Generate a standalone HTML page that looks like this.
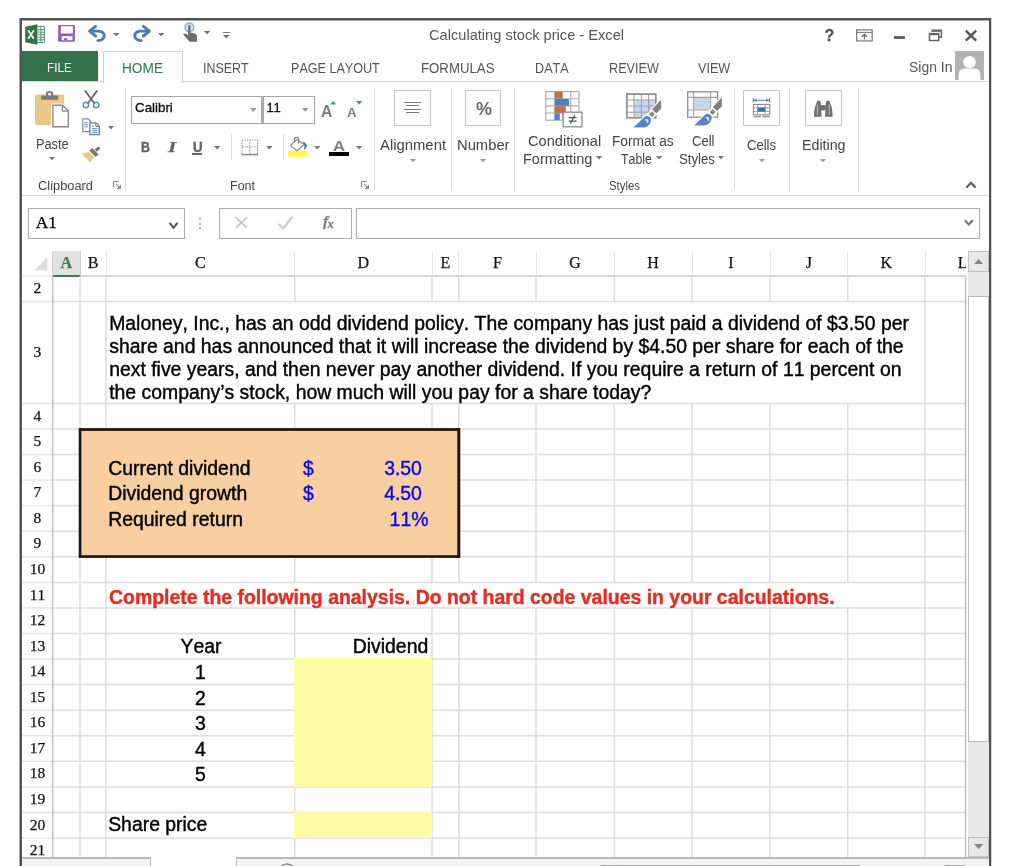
<!DOCTYPE html>
<html lang="en"><head><meta charset="utf-8"><title>Calculating stock price - Excel</title>
<style>
html,body{margin:0;padding:0;background:#fff;}
body{width:1024px;height:866px;overflow:hidden;position:relative;font-kerning:none;}
#app{position:absolute;left:0;top:0;width:1024px;height:866px;will-change:transform;}
.a{position:absolute;display:block;}
.t{position:absolute;white-space:pre;display:block;}
.s{font-family:"Liberation Sans",sans-serif;}
.r{font-family:"Liberation Serif",serif;-webkit-text-stroke:0.25px;}
.b{font-weight:bold;}
.i{font-style:italic;}
</style></head>
<body>
<div id="app">
<!-- part1 -->
<div class="a" style="left:19px;top:18px;width:973px;height:3px;background:#a7a7a7;"></div>
<div class="a" style="left:19px;top:18px;width:1px;height:848px;background:#a7a7a7;"></div>
<div class="a" style="left:991px;top:18px;width:1px;height:848px;background:#d2d2d2;"></div>
<div class="a" style="left:20px;top:20px;width:971px;height:1px;background:#a7a7a7;"></div>
<div class="a" style="left:22px;top:20px;width:967px;height:1px;background:#a7a7a7;"></div>
<div class="a" style="left:20px;top:18px;width:971px;height:2px;background:#525252;"></div>
<div class="a" style="left:20px;top:18px;width:2px;height:848px;background:#525252;"></div>
<div class="a" style="left:989px;top:18px;width:2px;height:848px;background:#525252;"></div>
<svg class="a" style="left:25px;top:24px" width="20" height="21" viewBox="0 0 20 21"><rect x="11" y="2.4" width="8.4" height="16.2" rx="0.6" fill="#fff" stroke="#3b7a52" stroke-width="0.9"/><path d="M12.5 5.5h6.6M12.5 8.1h6.6M12.5 10.7h6.6M12.5 13.3h6.6M12.5 15.9h6.6" stroke="#3b7a52" stroke-width="0.8"/><path d="M15.9 2.5v16" stroke="#3b7a52" stroke-width="0.8"/><path d="M0.2 2.7L12.4 0.2V20.8L0.2 18.3Z" fill="#34744b"/><path d="M3.2 6.4L8.8 14.8M8.8 6.4L3.2 14.8" stroke="#fff" stroke-width="1.7" fill="none"/></svg>
<svg class="a" style="left:58px;top:25px" width="17" height="17" viewBox="0 0 17 17"><rect x="0.2" y="0.1" width="16.7" height="16.7" rx="0.8" fill="#8c5fb2"/><rect x="2.8" y="1.2" width="12.1" height="7.3" fill="#fff"/><rect x="3.7" y="11.2" width="10.8" height="4" fill="#fff"/><rect x="6" y="13.2" width="3.3" height="2.2" fill="#8c5fb2"/></svg>
<svg class="a" style="left:87px;top:24px" width="20" height="18" viewBox="0 0 20 18"><path d="M95.6 26.4L89.6 31.2L95.6 36" fill="none" stroke="#4b7ab5" stroke-width="2.9" stroke-linecap="round" stroke-linejoin="round" transform="translate(-87,-24)"/><path d="M90.5 31.2H98.6C103.4 31.2 105.6 35.2 103.4 38.2C102 40 100 40.6 97.8 40.6" fill="none" stroke="#4b7ab5" stroke-width="2.8" stroke-linecap="round" transform="translate(-87,-24)"/></svg>
<svg class="a" style="left:112.8px;top:33px" width="6.4" height="3.4" viewBox="0 0 6.4 3.4"><path d="M0 0H6.4L3.2 3.4Z" fill="#777"/></svg>
<svg class="a" style="left:131.6px;top:24px" width="20" height="18" viewBox="0 0 20 18"><g transform="translate(20,0) scale(-1,1)"><path d="M95.6 26.4L89.6 31.2L95.6 36" fill="none" stroke="#4b7ab5" stroke-width="2.9" stroke-linecap="round" stroke-linejoin="round" transform="translate(-87,-24)"/><path d="M90.5 31.2H98.6C103.4 31.2 105.6 35.2 103.4 38.2C102 40 100 40.6 97.8 40.6" fill="none" stroke="#4b7ab5" stroke-width="2.8" stroke-linecap="round" transform="translate(-87,-24)"/></g></svg>
<svg class="a" style="left:157.9px;top:33px" width="6.2" height="3.4" viewBox="0 0 6.2 3.4"><path d="M0 0H6.2L3.1 3.4Z" fill="#777"/></svg>
<svg class="a" style="left:182px;top:21px" width="17" height="22" viewBox="0 0 17 22"><circle cx="7.4" cy="6.4" r="4.3" fill="#dbe6f3" stroke="#8fb0d8" stroke-width="1.6"/><path d="M6.1 4.5Q7.3 3.6 8.5 4.5V11.5L12.8 12.6Q15 13.3 15 15.5V20.8H7.6L1.2 13.6Q2.3 11.9 4.2 13L6.1 14.6Z" fill="#6d6d6d"/></svg>
<svg class="a" style="left:203.9px;top:31px" width="6.2" height="3.6" viewBox="0 0 6.2 3.6"><path d="M0 0H6.2L3.1 3.6Z" fill="#777"/></svg>
<div class="a" style="left:223px;top:31.5px;width:6.800000000000011px;height:1.2999999999999972px;background:#777;"></div>
<svg class="a" style="left:223.0px;top:35px" width="6.8" height="3.6" viewBox="0 0 6.8 3.6"><path d="M0 0H6.8L3.4 3.6Z" fill="#777"/></svg>
<span class="t s" style="left:428.60px;top:27.00px;font-size:14.5px;line-height:16px;color:#555;transform:scaleX(1.0083);transform-origin:0 50%;">Calculating stock price - Excel</span>
<span class="t s b" style="left:824.60px;top:27.00px;font-size:16px;line-height:17px;color:#555;-webkit-text-stroke:0.3px;">?</span>
<svg class="a" style="left:856px;top:29px" width="17" height="13" viewBox="0 0 17 13"><rect x="0.6" y="0.9" width="15.6" height="11" fill="#fff" stroke="#777" stroke-width="1.2"/><path d="M0.6 3.4H16.2" stroke="#777" stroke-width="1"/><path d="M8.4 10.4V5.6M5.8 7.8L8.4 5.3L11 7.8" stroke="#666" stroke-width="1.2" fill="none"/></svg>
<div class="a" style="left:894px;top:36.2px;width:11.200000000000045px;height:2.5999999999999943px;background:#666;"></div>
<svg class="a" style="left:928px;top:29px" width="15" height="13" viewBox="0 0 15 13"><path d="M4.2 3V1.2H13.4V8.2H11" fill="none" stroke="#666" stroke-width="1.5"/><path d="M4.2 2.2H13.4" stroke="#666" stroke-width="1.2"/><rect x="1.5" y="4.6" width="9.3" height="6.9" fill="#fff" stroke="#666" stroke-width="1.5"/><path d="M1.5 5.6H10.8" stroke="#666" stroke-width="1.3"/></svg>
<svg class="a" style="left:964px;top:29px" width="14" height="13" viewBox="0 0 14 13"><path d="M1.8 1.6L12.2 11.6M12.2 1.6L1.8 11.6" stroke="#555" stroke-width="2.3" fill="none"/></svg>
<div class="a" style="left:22px;top:81px;width:967px;height:1px;background:#d6d6d6;"></div>
<div class="a" style="left:22px;top:51px;width:76px;height:30px;background:#35714a;"></div>
<div class="a" style="left:103px;top:51px;width:79.5px;height:31.5px;background:#fff;border:1px solid #d0d0d0;border-bottom:none;box-sizing:border-box;"></div>
<span class="t s" style="left:46.60px;top:60.00px;font-size:13.2px;line-height:15px;color:#fff;transform:scaleX(0.8860);transform-origin:0 50%;">FILE</span>
<span class="t s" style="left:122.00px;top:61.00px;font-size:13.8px;line-height:15px;color:#2f7a4d;transform:scaleX(0.9903);transform-origin:0 50%;">HOME</span>
<span class="t s" style="left:202.50px;top:61.00px;font-size:13.8px;line-height:15px;color:#555;transform:scaleX(0.8992);transform-origin:0 50%;">INSERT</span>
<span class="t s" style="left:290.50px;top:61.00px;font-size:13.8px;line-height:15px;color:#555;transform:scaleX(0.9120);transform-origin:0 50%;">PAGE LAYOUT</span>
<span class="t s" style="left:420.80px;top:61.00px;font-size:13.8px;line-height:15px;color:#555;transform:scaleX(0.9586);transform-origin:0 50%;">FORMULAS</span>
<span class="t s" style="left:535.30px;top:61.00px;font-size:13.8px;line-height:15px;color:#555;transform:scaleX(0.9164);transform-origin:0 50%;">DATA</span>
<span class="t s" style="left:609.40px;top:61.00px;font-size:13.8px;line-height:15px;color:#555;transform:scaleX(0.9166);transform-origin:0 50%;">REVIEW</span>
<span class="t s" style="left:697.50px;top:61.00px;font-size:13.8px;line-height:15px;color:#555;transform:scaleX(0.9157);transform-origin:0 50%;">VIEW</span>
<span class="t s" style="left:908.50px;top:59.00px;font-size:14.4px;line-height:16px;color:#555;transform:scaleX(0.9704);transform-origin:0 50%;">Sign In</span>
<svg class="a" style="left:955px;top:51px" width="29" height="29" viewBox="0 0 29 29"><rect width="29" height="29" fill="#b3b3b3"/><circle cx="14.5" cy="11.2" r="6.2" fill="#fff"/><path d="M3.6 29V24.5Q3.6 17.6 9.4 17.6H19.6Q25.4 17.6 25.4 24.5V29Z" fill="#fff"/></svg>
<!-- part2 -->
<div class="a" style="left:22px;top:195px;width:967px;height:1px;background:#d6d6d6;"></div>
<div class="a" style="left:125px;top:87.5px;width:1px;height:102.0px;background:#dadada;"></div>
<div class="a" style="left:373.5px;top:87.5px;width:1.0px;height:102.0px;background:#dadada;"></div>
<div class="a" style="left:450.5px;top:87.5px;width:1.0px;height:103.5px;background:#dadada;"></div>
<div class="a" style="left:514px;top:87.5px;width:1px;height:103.5px;background:#dadada;"></div>
<div class="a" style="left:734px;top:87.5px;width:1px;height:102.0px;background:#dadada;"></div>
<div class="a" style="left:788.5px;top:87.5px;width:1.0px;height:103.5px;background:#dadada;"></div>
<div class="a" style="left:857.5px;top:87.5px;width:1.0px;height:103.5px;background:#dadada;"></div>
<svg class="a" style="left:34px;top:90px" width="37" height="39" viewBox="0 0 37 39"><rect x="1" y="4.6" width="29.2" height="30.4" rx="1.8" fill="#e9c785"/><path d="M7 5.4H12V3.2Q12 1 15.6 1Q19.2 1 19.2 3.2V5.4H24.2V9.8H7Z" fill="#7a7a7a"/><circle cx="15.6" cy="4.2" r="1.4" fill="#fff"/><path d="M17 13.4H29.2L36 20.2V38.4H17Z" fill="#fff"/><path d="M18.9 15.2H28.6L34.3 20.9V36.7H18.9Z" fill="#fff" stroke="#8a8a8a" stroke-width="1.4"/><path d="M28.4 15.4V21.2H34.2" fill="none" stroke="#8a8a8a" stroke-width="1.2"/></svg>
<span class="t s" style="left:36.30px;top:136.00px;font-size:14.0px;line-height:16px;color:#444;transform:scaleX(0.9079);transform-origin:0 50%;">Paste</span>
<svg class="a" style="left:49.0px;top:156.8px" width="6" height="3.4" viewBox="0 0 6 3.4"><path d="M0 0H6L3.0 3.4Z" fill="#777"/></svg>
<svg class="a" style="left:81px;top:90px" width="20" height="20" viewBox="0 0 20 20"><path d="M4.4 1L13.2 13.2M15.8 1L7 13.2" stroke="#6a6a6a" stroke-width="1.9" fill="none" stroke-linecap="round"/><circle cx="4.9" cy="15" r="2.7" fill="none" stroke="#5b8bc9" stroke-width="1.5"/><circle cx="15.2" cy="15" r="2.7" fill="none" stroke="#5b8bc9" stroke-width="1.5"/></svg>
<svg class="a" style="left:81px;top:117px" width="20" height="19" viewBox="0 0 20 19"><path d="M1.8 1.9H7.2L9.8 4.5V14.6H1.8Z" fill="#fff" stroke="#8a8a8a" stroke-width="1.2"/><path d="M3.4 5.4H6.4M3.4 7.6H6.8M3.4 9.8H6.8" stroke="#5b8bc9" stroke-width="1"/><path d="M8.9 5.9H15L18.3 9.2V17.6H8.9Z" fill="#fff" stroke="#7a7a7a" stroke-width="1.3"/><path d="M14.8 6V9.4H18.2" fill="none" stroke="#7a7a7a" stroke-width="1"/><path d="M10.8 9.4H13M10.8 11.6H16.4M10.8 13.6H16.4M10.8 15.6H16.4" stroke="#5b8bc9" stroke-width="1"/></svg>
<svg class="a" style="left:108.0px;top:126px" width="6" height="3.6" viewBox="0 0 6 3.6"><path d="M0 0H6L3.0 3.6Z" fill="#777"/></svg>
<svg class="a" style="left:80px;top:144px" width="23" height="20" viewBox="0 0 23 20"><path d="M1.6 9.6L9 8L14.4 13.2L10.2 18.6Z" fill="#e9c785"/><path d="M9.2 6.4L12.2 3.9L18.6 10.4L15.6 13Z" fill="#777"/><path d="M14.6 5.4L18.4 2.2L20.6 4.4L17 7.8Z" fill="#777"/></svg>
<span class="t s" style="left:37.50px;top:178.00px;font-size:13.1px;line-height:15px;color:#444;transform:scaleX(0.9812);transform-origin:0 50%;">Clipboard</span>
<svg class="a" style="left:113px;top:180.5px" width="9" height="9" viewBox="0 0 9 9"><path d="M0.5 6V0.5H6" fill="none" stroke="#888" stroke-width="1"/><path d="M3.2 3.2L7.2 7.2" stroke="#888" stroke-width="1.1"/><path d="M8 3.6V8H3.6Z" fill="#888"/></svg>
<div class="a" style="left:130.5px;top:95.8px;width:131.5px;height:28.400000000000006px;background:#fff;border:1px solid #a6a6a6;box-sizing:border-box;"></div>
<div class="a" style="left:262.6px;top:95.8px;width:52.39999999999998px;height:28.400000000000006px;background:#fff;border:1px solid #a6a6a6;box-sizing:border-box;"></div>
<div class="a" style="left:261.6px;top:95.8px;width:1.599999999999966px;height:28.400000000000006px;background:#b5b5b5;"></div>
<span class="t s" style="left:134.90px;top:100.00px;font-size:13px;line-height:15px;color:#111;transform:scaleX(1.0264);transform-origin:0 50%;-webkit-text-stroke:0.3px;">Calibri</span>
<svg class="a" style="left:249.8px;top:108px" width="6.4" height="4" viewBox="0 0 6.4 4"><path d="M0 0H6.4L3.2 4Z" fill="#999"/></svg>
<span class="t s" style="left:266.40px;top:100.00px;font-size:13px;line-height:15px;color:#111;-webkit-text-stroke:0.3px;">11</span>
<svg class="a" style="left:301.8px;top:108px" width="6.4" height="4" viewBox="0 0 6.4 4"><path d="M0 0H6.4L3.2 4Z" fill="#999"/></svg>
<span class="t s b" style="left:321.00px;top:102.00px;font-size:16.8px;line-height:19px;color:#7d7d7d;transform:scaleX(0.9398);transform-origin:0 50%;">A</span>
<svg class="a" style="left:330.2px;top:101.4px" width="6.4" height="3.6" viewBox="0 0 6.4 3.6"><path d="M0 3.6H6.4L3.2 0Z" fill="#4f81c4"/></svg>
<span class="t s b" style="left:347.40px;top:105.00px;font-size:12.8px;line-height:15px;color:#7d7d7d;transform:scaleX(1.0388);transform-origin:0 50%;">A</span>
<svg class="a" style="left:355.6px;top:101.4px" width="6.4" height="3.6" viewBox="0 0 6.4 3.6"><path d="M0 0H6.4L3.2 3.6Z" fill="#4f81c4"/></svg>
<span class="t s b" style="left:140.60px;top:139.00px;font-size:14px;line-height:16px;color:#666;transform:scaleX(0.8805);transform-origin:0 50%;-webkit-text-stroke:0.5px;">B</span>
<span class="t r b i" style="left:168.00px;top:138.00px;font-size:15.5px;line-height:17px;color:#666;transform:scaleX(1.3600);transform-origin:0 50%;">I</span>
<span class="t s b" style="left:192.60px;top:139.00px;font-size:14px;line-height:16px;color:#666;transform:scaleX(0.9497);transform-origin:0 50%;-webkit-text-stroke:0.4px;">U</span>
<div class="a" style="left:192.4px;top:153.3px;width:10.0px;height:1.5px;background:#666;"></div>
<svg class="a" style="left:213.9px;top:146px" width="6.2" height="3.5" viewBox="0 0 6.2 3.5"><path d="M0 0H6.2L3.1 3.5Z" fill="#777"/></svg>
<div class="a" style="left:231.2px;top:134px;width:1.0px;height:25.80000000000001px;background:#dadada;"></div>
<svg class="a" style="left:241px;top:138.5px" width="18" height="17" viewBox="0 0 18 17"><path d="M1 1H16.6M1 8H16.6M1 1V15M8.8 1V15M16.6 1V15" stroke="#8a8a8a" stroke-width="1.1" stroke-dasharray="1.2 1.3" fill="none"/><path d="M0.4 15.6H17.2" stroke="#8a8a8a" stroke-width="1.5"/></svg>
<svg class="a" style="left:265.8px;top:146px" width="6.4" height="3.5" viewBox="0 0 6.4 3.5"><path d="M0 0H6.4L3.2 3.5Z" fill="#777"/></svg>
<div class="a" style="left:283px;top:134px;width:1px;height:25.599999999999994px;background:#dadada;"></div>
<svg class="a" style="left:284px;top:132px" width="28" height="28" viewBox="284 132 28 28"><rect x="288.1" y="150.9" width="19" height="5.9" fill="#fdfb48"/><path d="M296.6 139.6L304.2 144.6L297 150.8L290.4 145.4Z" fill="#fff" stroke="#8a8a8a" stroke-width="1.2" stroke-linejoin="round"/><path d="M294.5 141.8V138.4Q294.5 137.3 295.6 137.3H297.5Q298.6 137.3 298.6 138.4V143.4" fill="none" stroke="#7c7c7c" stroke-width="1.2"/><path d="M302.6 141.4Q306.6 142.6 307 145.6Q307 148.4 304 149.9Q305 146.6 303.9 144.4Z" fill="#4a7ab8"/></svg>
<svg class="a" style="left:314.3px;top:146px" width="6.4" height="3.5" viewBox="0 0 6.4 3.5"><path d="M0 0H6.4L3.2 3.5Z" fill="#777"/></svg>
<span class="t s b" style="left:333.30px;top:137.00px;font-size:15.4px;line-height:17px;color:#7d7d7d;transform:scaleX(1.0882);transform-origin:0 50%;">A</span>
<div class="a" style="left:329px;top:152.2px;width:19.80000000000001px;height:4.300000000000011px;background:#000;"></div>
<svg class="a" style="left:355.9px;top:146px" width="6.2" height="3.5" viewBox="0 0 6.2 3.5"><path d="M0 0H6.2L3.1 3.5Z" fill="#777"/></svg>
<span class="t s" style="left:229.50px;top:178.00px;font-size:13.1px;line-height:15px;color:#444;transform:scaleX(0.9537);transform-origin:0 50%;">Font</span>
<svg class="a" style="left:361px;top:180.5px" width="9" height="9" viewBox="0 0 9 9"><path d="M0.5 6V0.5H6" fill="none" stroke="#888" stroke-width="1"/><path d="M3.2 3.2L7.2 7.2" stroke="#888" stroke-width="1.1"/><path d="M8 3.6V8H3.6Z" fill="#888"/></svg>
<div class="a" style="left:394px;top:90px;width:37px;height:36px;background:#fff;border:1px solid #c8c8c8;box-sizing:border-box;"></div>
<div class="a" style="left:404px;top:101.6px;width:17px;height:1.1000000000000085px;background:#777;"></div>
<div class="a" style="left:406.4px;top:105.05px;width:12.200000000000045px;height:1.1000000000000085px;background:#777;"></div>
<div class="a" style="left:404px;top:108.5px;width:17px;height:1.0999999999999943px;background:#777;"></div>
<div class="a" style="left:406.4px;top:111.95px;width:12.200000000000045px;height:1.0999999999999943px;background:#777;"></div>
<span class="t s" style="left:379.50px;top:137.00px;font-size:14.0px;line-height:16px;color:#444;transform:scaleX(1.0603);transform-origin:0 50%;">Alignment</span>
<svg class="a" style="left:409.5px;top:159px" width="6" height="3.4" viewBox="0 0 6 3.4"><path d="M0 0H6L3.0 3.4Z" fill="#999"/></svg>
<div class="a" style="left:465px;top:90px;width:36px;height:36px;background:#fff;border:1px solid #c8c8c8;box-sizing:border-box;"></div>
<span class="t s b" style="left:475.90px;top:99.00px;font-size:18px;line-height:20px;color:#6a6a6a;transform:scaleX(0.9999);transform-origin:0 50%;">%</span>
<span class="t s" style="left:457.00px;top:137.00px;font-size:14.0px;line-height:16px;color:#444;transform:scaleX(1.0546);transform-origin:0 50%;">Number</span>
<svg class="a" style="left:480.0px;top:159px" width="6" height="3.4" viewBox="0 0 6 3.4"><path d="M0 0H6L3.0 3.4Z" fill="#999"/></svg>
<svg class="a" style="left:545px;top:91px" width="38" height="37" viewBox="0 0 38 37"><rect x="0.8" y="0.6" width="33.2" height="28.6" fill="#fff" stroke="#ababab" stroke-width="1.2"/><path d="M9.4 0.6V29.2M17.6 0.6V29.2M25.8 0.6V29.2M0.8 7.7H34M0.8 14.9H34M0.8 22H34" stroke="#ababab" stroke-width="1.1"/><rect x="10" y="0.8" width="7" height="6.8" fill="#d06a48"/><rect x="10" y="8" width="14" height="6.8" fill="#4f81bd"/><rect x="10" y="15.2" width="10.8" height="6.8" fill="#d06a48"/><rect x="10" y="22.4" width="4.8" height="6.6" fill="#4f81bd"/><rect x="18.2" y="21.2" width="18.8" height="14.6" fill="#fff" stroke="#8c8c8c" stroke-width="1.3"/><path d="M23.6 26.6H31.6M23.6 30.2H31.6M29.8 24.2L25.4 32.6" stroke="#555" stroke-width="1.2" fill="none"/></svg>
<span class="t s" style="left:527.50px;top:133.00px;font-size:14.0px;line-height:16px;color:#444;transform:scaleX(1.0439);transform-origin:0 50%;">Conditional</span>
<span class="t s" style="left:522.60px;top:151.00px;font-size:14.0px;line-height:16px;color:#444;transform:scaleX(1.0373);transform-origin:0 50%;">Formatting</span>
<svg class="a" style="left:596.4px;top:156.2px" width="6.2" height="3.4" viewBox="0 0 6.2 3.4"><path d="M0 0H6.2L3.1 3.4Z" fill="#777"/></svg>
<svg class="a" style="left:620px;top:86px" width="110" height="46" viewBox="620 86 110 46"><rect x="626.8" y="94.1" width="29" height="23.6" fill="#fff" stroke="#8e8e8e" stroke-width="1.3"/><rect x="634" y="100" width="21.6" height="17.6" fill="#c5d5ea"/><path d="M634 94V118M641.4 94V118M648.7 94V118M626.8 100H656M626.8 106H656M626.8 112.2H656" stroke="#a2a2a2" stroke-width="1.1"/><rect x="626.8" y="94.1" width="29" height="23.6" fill="none" stroke="#8e8e8e" stroke-width="1.3"/><g transform="translate(0,0)"><path d="M661.2 99.4V108.4L656.2 113.4L651.8 109.8Z" fill="#fff" stroke="#fff" stroke-width="2.4"/><path d="M661.2 99.4V108.4L656.2 113.4L651.8 109.8Z" fill="#808080"/><path d="M651.8 110.9L655.3 114.2L652 117.7L648.5 114.4Z" fill="#fff" stroke="#fff" stroke-width="2.6"/><path d="M651.8 111.3L654.9 114.3L652 117.3L648.9 114.4Z" fill="#858585"/><path d="M645.2 116.2C649.4 115.2 652.2 118.6 650.6 122.2C649.4 125.2 647 127.6 642.6 127.6H633.4Z" fill="#fff" stroke="#fff" stroke-width="2"/><path d="M645.2 116.2C649.4 115.2 652.2 118.6 650.6 122.2C649.4 125.2 647 127.6 642.6 127.6H633.4Z" fill="#5785c5"/><path d="M644.6 119.4Q647.6 118 648.6 120.8Q648.8 122.6 647.4 123.4Q646.8 121 644.6 119.4Z" fill="#e4edf8"/></g><rect x="687.7" y="91.8" width="30" height="25.4" fill="#fff" stroke="#8e8e8e" stroke-width="1.3"/><rect x="694.2" y="98" width="16" height="11.6" fill="#c5d5ea"/><path d="M693.7 91.8V117.2M710.6 91.8V117.2M687.7 97.4H717.7M687.7 110H717.7" stroke="#a2a2a2" stroke-width="1.1"/><g transform="translate(60.7,-2.2)"><path d="M661.2 99.4V108.4L656.2 113.4L651.8 109.8Z" fill="#fff" stroke="#fff" stroke-width="2.4"/><path d="M661.2 99.4V108.4L656.2 113.4L651.8 109.8Z" fill="#808080"/><path d="M651.8 110.9L655.3 114.2L652 117.7L648.5 114.4Z" fill="#fff" stroke="#fff" stroke-width="2.6"/><path d="M651.8 111.3L654.9 114.3L652 117.3L648.9 114.4Z" fill="#858585"/><path d="M645.2 116.2C649.4 115.2 652.2 118.6 650.6 122.2C649.4 125.2 647 127.6 642.6 127.6H633.4Z" fill="#fff" stroke="#fff" stroke-width="2"/><path d="M645.2 116.2C649.4 115.2 652.2 118.6 650.6 122.2C649.4 125.2 647 127.6 642.6 127.6H633.4Z" fill="#5785c5"/><path d="M644.6 119.4Q647.6 118 648.6 120.8Q648.8 122.6 647.4 123.4Q646.8 121 644.6 119.4Z" fill="#e4edf8"/></g></svg>
<span class="t s" style="left:612.00px;top:133.00px;font-size:14.0px;line-height:16px;color:#444;transform:scaleX(0.9791);transform-origin:0 50%;">Format as</span>
<span class="t s" style="left:620.60px;top:151.00px;font-size:14.0px;line-height:16px;color:#444;transform:scaleX(0.8831);transform-origin:0 50%;">Table</span>
<svg class="a" style="left:655.9px;top:156.2px" width="6.2" height="3.4" viewBox="0 0 6.2 3.4"><path d="M0 0H6.2L3.1 3.4Z" fill="#777"/></svg>
<span class="t s" style="left:692.00px;top:133.00px;font-size:14.0px;line-height:16px;color:#444;transform:scaleX(0.9333);transform-origin:0 50%;">Cell</span>
<span class="t s" style="left:678.60px;top:151.00px;font-size:14.0px;line-height:16px;color:#444;transform:scaleX(0.9417);transform-origin:0 50%;">Styles</span>
<svg class="a" style="left:718.2px;top:156.2px" width="6" height="3.4" viewBox="0 0 6 3.4"><path d="M0 0H6L3.0 3.4Z" fill="#777"/></svg>
<span class="t s" style="left:609.00px;top:178.00px;font-size:13.1px;line-height:15px;color:#444;transform:scaleX(0.8690);transform-origin:0 50%;">Styles</span>
<div class="a" style="left:743px;top:90px;width:37px;height:36px;background:#fff;border:1px solid #c8c8c8;box-sizing:border-box;"></div>
<svg class="a" style="left:752px;top:97px" width="20" height="21" viewBox="0 0 20 21"><path d="M1.2 1V5.4M17.6 1V5.4M1.2 3.2H17.6" stroke="#4f81c4" stroke-width="1.1" fill="none"/><path d="M4.6 1.2L2 3.2L4.6 5.2ZM14.2 1.2L16.8 3.2L14.2 5.2Z" fill="#4f81c4"/><rect x="1.4" y="7.4" width="16.4" height="10.4" fill="#fff" stroke="#8a8a8a" stroke-width="1.1"/><path d="M5.6 7.4V17.8M13.2 7.4V17.8M1.4 10.8H17.8M1.4 14.4H17.8" stroke="#9a9a9a" stroke-width="1"/><rect x="5.8" y="10.6" width="7.4" height="4" fill="#3f6fb3"/><path d="M1.6 19.6H9M10.4 19.6H17.8" stroke="#8a8a8a" stroke-width="1.4"/></svg>
<span class="t s" style="left:747.00px;top:137.00px;font-size:14.0px;line-height:16px;color:#444;transform:scaleX(0.9322);transform-origin:0 50%;">Cells</span>
<svg class="a" style="left:759.0px;top:159px" width="6" height="3.4" viewBox="0 0 6 3.4"><path d="M0 0H6L3.0 3.4Z" fill="#999"/></svg>
<div class="a" style="left:805px;top:90px;width:37px;height:36px;background:#fff;border:1px solid #c8c8c8;box-sizing:border-box;"></div>
<svg class="a" style="left:813px;top:99px" width="21" height="19" viewBox="0 0 21 19"><path d="M3.4 4.6Q3.4 1.6 5.6 1.6Q7.8 1.6 7.8 4.6L8.6 17.8H1Q1 9 3.4 4.6Z" fill="#6f6f6f"/><path d="M17.2 4.6Q17.2 1.6 15 1.6Q12.8 1.6 12.8 4.6L12 17.8H19.6Q19.6 9 17.2 4.6Z" fill="#6f6f6f"/><rect x="8" y="6" width="4.6" height="5.4" fill="#6f6f6f"/><path d="M4.4 5.6V15.8" stroke="#bdbdbd" stroke-width="1"/><path d="M16.2 5.6V15.8" stroke="#bdbdbd" stroke-width="1"/></svg>
<span class="t s" style="left:802.00px;top:137.00px;font-size:14.0px;line-height:16px;color:#444;transform:scaleX(1.0164);transform-origin:0 50%;">Editing</span>
<svg class="a" style="left:820.0px;top:159px" width="6" height="3.4" viewBox="0 0 6 3.4"><path d="M0 0H6L3.0 3.4Z" fill="#999"/></svg>
<svg class="a" style="left:965px;top:180px" width="12" height="9" viewBox="0 0 12 9"><path d="M1.4 7.6L6 2.8L10.6 7.6" fill="none" stroke="#5a5a5a" stroke-width="2.2"/></svg>
<!-- part3 -->
<div class="a" style="left:28px;top:208px;width:157.3px;height:30.80000000000001px;background:#fff;border:1px solid #ababab;box-sizing:border-box;"></div>
<span class="t r" style="left:35.80px;top:213.00px;font-size:17.2px;line-height:19px;color:#000;">A1</span>
<svg class="a" style="left:168px;top:221px" width="11" height="10" viewBox="0 0 11 10"><path d="M1.6 1.8L5.5 6.8L9.4 1.8" fill="none" stroke="#555" stroke-width="2.1"/></svg>
<div class="a" style="left:199px;top:218.4px;width:2px;height:2.0px;background:#b4b4b4;"></div>
<div class="a" style="left:199px;top:222.9px;width:2px;height:2.0px;background:#b4b4b4;"></div>
<div class="a" style="left:199px;top:227.4px;width:2px;height:2.0px;background:#b4b4b4;"></div>
<div class="a" style="left:219px;top:208px;width:133px;height:30.80000000000001px;background:#fff;border:1px solid #ababab;box-sizing:border-box;"></div>
<svg class="a" style="left:234px;top:216px" width="15" height="13" viewBox="0 0 15 13"><path d="M1.6 1.4L13 11.8M13 1.4L1.6 11.8" stroke="#c4c4c4" stroke-width="1.7" fill="none"/></svg>
<svg class="a" style="left:277px;top:215px" width="17" height="15" viewBox="0 0 17 15"><path d="M1.6 9L6.2 13.4L15.4 1.8" stroke="#cacaca" stroke-width="2.2" fill="none"/></svg>
<span class="t r b i" style="left:323.00px;top:212.00px;font-size:15.5px;line-height:17px;color:#808080;-webkit-text-stroke:0.3px;">f</span>
<span class="t r b i" style="left:327.60px;top:217.00px;font-size:12.5px;line-height:14px;color:#808080;-webkit-text-stroke:0.3px;">x</span>
<div class="a" style="left:356px;top:208px;width:624.3px;height:30.80000000000001px;background:#fff;border:1px solid #ababab;box-sizing:border-box;"></div>
<svg class="a" style="left:963px;top:218px" width="12" height="9" viewBox="0 0 12 9"><path d="M1.8 2.2L5.8 6.4L9.8 2.2" fill="none" stroke="#777" stroke-width="2.2"/></svg>
<div class="a" style="left:52.5px;top:251px;width:27.5px;height:24px;background:#e1e1e1;"></div>
<div class="a" style="left:52.5px;top:274.5px;width:27.5px;height:2.3000000000000114px;background:#3d7a52;"></div>
<svg class="a" style="left:33px;top:256px" width="16" height="16" viewBox="0 0 16 16"><path d="M1.2 14.4H14.4V1.2Z" fill="#dcdcdc"/></svg>
<div class="a" style="left:79.5px;top:251px;width:1.0px;height:25px;background:#e6e6e6;"></div>
<div class="a" style="left:105.5px;top:251px;width:1.0px;height:25px;background:#e6e6e6;"></div>
<div class="a" style="left:294.2px;top:251px;width:1.0px;height:25px;background:#e6e6e6;"></div>
<div class="a" style="left:431.5px;top:251px;width:1.0px;height:25px;background:#e6e6e6;"></div>
<div class="a" style="left:458.3px;top:251px;width:1.0px;height:25px;background:#e6e6e6;"></div>
<div class="a" style="left:535.5px;top:251px;width:1.0px;height:25px;background:#e6e6e6;"></div>
<div class="a" style="left:613.8px;top:251px;width:1.0px;height:25px;background:#e6e6e6;"></div>
<div class="a" style="left:691.5px;top:251px;width:1.0px;height:25px;background:#e6e6e6;"></div>
<div class="a" style="left:769.5px;top:251px;width:1.0px;height:25px;background:#e6e6e6;"></div>
<div class="a" style="left:847.2px;top:251px;width:1.0px;height:25px;background:#e6e6e6;"></div>
<div class="a" style="left:924.5px;top:251px;width:1.0px;height:25px;background:#e6e6e6;"></div>
<div class="a" style="left:52px;top:251px;width:1px;height:25px;background:#cfcfcf;"></div>
<div class="a" style="left:79.5px;top:251px;width:1.0px;height:25px;background:#cfcfcf;"></div>
<span class="t r b" style="left:-133.75px;width:400px;text-align:center;top:254.00px;font-size:16px;line-height:17px;color:#3d7a52;">A</span>
<span class="t r" style="left:-107.00px;width:400px;text-align:center;top:254.00px;font-size:16px;line-height:17px;color:#111;">B</span>
<span class="t r" style="left:0.35px;width:400px;text-align:center;top:254.00px;font-size:16px;line-height:17px;color:#111;">C</span>
<span class="t r" style="left:163.35px;width:400px;text-align:center;top:254.00px;font-size:16px;line-height:17px;color:#111;">D</span>
<span class="t r" style="left:245.40px;width:400px;text-align:center;top:254.00px;font-size:16px;line-height:17px;color:#111;">E</span>
<span class="t r" style="left:297.40px;width:400px;text-align:center;top:254.00px;font-size:16px;line-height:17px;color:#111;">F</span>
<span class="t r" style="left:375.15px;width:400px;text-align:center;top:254.00px;font-size:16px;line-height:17px;color:#111;">G</span>
<span class="t r" style="left:453.15px;width:400px;text-align:center;top:254.00px;font-size:16px;line-height:17px;color:#111;">H</span>
<span class="t r" style="left:531.00px;width:400px;text-align:center;top:254.00px;font-size:16px;line-height:17px;color:#111;">I</span>
<span class="t r" style="left:608.85px;width:400px;text-align:center;top:254.00px;font-size:16px;line-height:17px;color:#111;">J</span>
<span class="t r" style="left:686.35px;width:400px;text-align:center;top:254.00px;font-size:16px;line-height:17px;color:#111;">K</span>
<span class="t r" style="left:762.60px;width:400px;text-align:center;top:254.00px;font-size:16px;line-height:17px;color:#111;">L</span>
<svg class="a" style="left:0;top:0" width="1024" height="866" viewBox="0 0 1024 866" fill="none"><path d="M22.00 276.00L52.50 276.00" stroke="#e6e6e6" stroke-width="1.5"/><path d="M80.00 276.00L965.50 276.00" stroke="#c9c9c9" stroke-width="1.5"/><path d="M22.00 301.60L52.50 301.60" stroke="#e6e6e6" stroke-width="1.5"/><path d="M52.50 301.60L965.50 301.60" stroke="#dcdcdc" stroke-width="1.5"/><path d="M22.00 403.50L52.50 403.50" stroke="#e6e6e6" stroke-width="1.5"/><path d="M52.50 403.50L965.50 403.50" stroke="#dcdcdc" stroke-width="1.5"/><path d="M22.00 429.00L52.50 429.00" stroke="#e6e6e6" stroke-width="1.5"/><path d="M52.50 429.00L965.50 429.00" stroke="#dcdcdc" stroke-width="1.5"/><path d="M22.00 454.56L52.50 454.56" stroke="#e6e6e6" stroke-width="1.5"/><path d="M52.50 454.56L965.50 454.56" stroke="#dcdcdc" stroke-width="1.5"/><path d="M22.00 480.12L52.50 480.12" stroke="#e6e6e6" stroke-width="1.5"/><path d="M52.50 480.12L965.50 480.12" stroke="#dcdcdc" stroke-width="1.5"/><path d="M22.00 505.69L52.50 505.69" stroke="#e6e6e6" stroke-width="1.5"/><path d="M52.50 505.69L965.50 505.69" stroke="#dcdcdc" stroke-width="1.5"/><path d="M22.00 531.25L52.50 531.25" stroke="#e6e6e6" stroke-width="1.5"/><path d="M52.50 531.25L965.50 531.25" stroke="#dcdcdc" stroke-width="1.5"/><path d="M22.00 556.81L52.50 556.81" stroke="#e6e6e6" stroke-width="1.5"/><path d="M52.50 556.81L965.50 556.81" stroke="#dcdcdc" stroke-width="1.5"/><path d="M22.00 582.38L52.50 582.38" stroke="#e6e6e6" stroke-width="1.5"/><path d="M52.50 582.38L965.50 582.38" stroke="#dcdcdc" stroke-width="1.5"/><path d="M22.00 607.94L52.50 607.94" stroke="#e6e6e6" stroke-width="1.5"/><path d="M52.50 607.94L965.50 607.94" stroke="#dcdcdc" stroke-width="1.5"/><path d="M22.00 633.50L52.50 633.50" stroke="#e6e6e6" stroke-width="1.5"/><path d="M52.50 633.50L965.50 633.50" stroke="#dcdcdc" stroke-width="1.5"/><path d="M22.00 659.06L52.50 659.06" stroke="#e6e6e6" stroke-width="1.5"/><path d="M52.50 659.06L965.50 659.06" stroke="#dcdcdc" stroke-width="1.5"/><path d="M22.00 684.62L52.50 684.62" stroke="#e6e6e6" stroke-width="1.5"/><path d="M52.50 684.62L965.50 684.62" stroke="#dcdcdc" stroke-width="1.5"/><path d="M22.00 710.19L52.50 710.19" stroke="#e6e6e6" stroke-width="1.5"/><path d="M52.50 710.19L965.50 710.19" stroke="#dcdcdc" stroke-width="1.5"/><path d="M22.00 735.75L52.50 735.75" stroke="#e6e6e6" stroke-width="1.5"/><path d="M52.50 735.75L965.50 735.75" stroke="#dcdcdc" stroke-width="1.5"/><path d="M22.00 761.31L52.50 761.31" stroke="#e6e6e6" stroke-width="1.5"/><path d="M52.50 761.31L965.50 761.31" stroke="#dcdcdc" stroke-width="1.5"/><path d="M22.00 786.88L52.50 786.88" stroke="#e6e6e6" stroke-width="1.5"/><path d="M52.50 786.88L965.50 786.88" stroke="#dcdcdc" stroke-width="1.5"/><path d="M22.00 812.44L52.50 812.44" stroke="#e6e6e6" stroke-width="1.5"/><path d="M52.50 812.44L965.50 812.44" stroke="#dcdcdc" stroke-width="1.5"/><path d="M22.00 838.00L52.50 838.00" stroke="#e6e6e6" stroke-width="1.5"/><path d="M52.50 838.00L965.50 838.00" stroke="#dcdcdc" stroke-width="1.5"/><path d="M52.60 276.00L52.60 858.00" stroke="#c2c2c2" stroke-width="1.5"/><path d="M80.00 276.00L80.00 858.00" stroke="#dcdcdc" stroke-width="1.5"/><path d="M106.00 276.00L106.00 858.00" stroke="#dcdcdc" stroke-width="1.5"/><path d="M294.70 276.00L294.70 301.60" stroke="#dcdcdc" stroke-width="1.5"/><path d="M294.70 403.50L294.70 582.40" stroke="#dcdcdc" stroke-width="1.5"/><path d="M294.70 607.90L294.70 858.00" stroke="#dcdcdc" stroke-width="1.5"/><path d="M432.00 276.00L432.00 301.60" stroke="#dcdcdc" stroke-width="1.5"/><path d="M432.00 403.50L432.00 582.40" stroke="#dcdcdc" stroke-width="1.5"/><path d="M432.00 607.90L432.00 858.00" stroke="#dcdcdc" stroke-width="1.5"/><path d="M458.80 276.00L458.80 301.60" stroke="#dcdcdc" stroke-width="1.5"/><path d="M458.80 403.50L458.80 582.40" stroke="#dcdcdc" stroke-width="1.5"/><path d="M458.80 607.90L458.80 858.00" stroke="#dcdcdc" stroke-width="1.5"/><path d="M536.00 276.00L536.00 301.60" stroke="#dcdcdc" stroke-width="1.5"/><path d="M536.00 403.50L536.00 582.40" stroke="#dcdcdc" stroke-width="1.5"/><path d="M536.00 607.90L536.00 858.00" stroke="#dcdcdc" stroke-width="1.5"/><path d="M614.30 276.00L614.30 301.60" stroke="#dcdcdc" stroke-width="1.5"/><path d="M614.30 403.50L614.30 582.40" stroke="#dcdcdc" stroke-width="1.5"/><path d="M614.30 607.90L614.30 858.00" stroke="#dcdcdc" stroke-width="1.5"/><path d="M692.00 276.00L692.00 301.60" stroke="#dcdcdc" stroke-width="1.5"/><path d="M692.00 403.50L692.00 582.40" stroke="#dcdcdc" stroke-width="1.5"/><path d="M692.00 607.90L692.00 858.00" stroke="#dcdcdc" stroke-width="1.5"/><path d="M770.00 276.00L770.00 301.60" stroke="#dcdcdc" stroke-width="1.5"/><path d="M770.00 403.50L770.00 582.40" stroke="#dcdcdc" stroke-width="1.5"/><path d="M770.00 607.90L770.00 858.00" stroke="#dcdcdc" stroke-width="1.5"/><path d="M847.70 276.00L847.70 301.60" stroke="#dcdcdc" stroke-width="1.5"/><path d="M847.70 403.50L847.70 582.40" stroke="#dcdcdc" stroke-width="1.5"/><path d="M847.70 607.90L847.70 858.00" stroke="#dcdcdc" stroke-width="1.5"/><path d="M925.00 276.00L925.00 858.00" stroke="#dcdcdc" stroke-width="1.5"/><path d="M965.60 276.00L965.60 858.00" stroke="#bdbdbd" stroke-width="1.4"/></svg>
<div class="a" style="left:294.1px;top:658.2px;width:138.29999999999995px;height:128.79999999999995px;background:#fffca6;"></div>
<div class="a" style="left:294.1px;top:811.7px;width:138.29999999999995px;height:26.799999999999955px;background:#fffca6;"></div>
<span class="t r" style="left:-162.60px;width:400px;text-align:center;top:279.00px;font-size:15.5px;line-height:17px;color:#111;">2</span>
<span class="t r" style="left:-162.60px;width:400px;text-align:center;top:343.00px;font-size:15.5px;line-height:17px;color:#111;">3</span>
<span class="t r" style="left:-162.60px;width:400px;text-align:center;top:407.00px;font-size:15.5px;line-height:17px;color:#111;">4</span>
<span class="t r" style="left:-162.60px;width:400px;text-align:center;top:432.00px;font-size:15.5px;line-height:17px;color:#111;">5</span>
<span class="t r" style="left:-162.60px;width:400px;text-align:center;top:458.00px;font-size:15.5px;line-height:17px;color:#111;">6</span>
<span class="t r" style="left:-162.60px;width:400px;text-align:center;top:483.00px;font-size:15.5px;line-height:17px;color:#111;">7</span>
<span class="t r" style="left:-162.60px;width:400px;text-align:center;top:509.00px;font-size:15.5px;line-height:17px;color:#111;">8</span>
<span class="t r" style="left:-162.60px;width:400px;text-align:center;top:534.00px;font-size:15.5px;line-height:17px;color:#111;">9</span>
<span class="t r" style="left:-162.60px;width:400px;text-align:center;top:560.00px;font-size:15.5px;line-height:17px;color:#111;">10</span>
<span class="t r" style="left:-162.60px;width:400px;text-align:center;top:586.00px;font-size:15.5px;line-height:17px;color:#111;">11</span>
<span class="t r" style="left:-162.60px;width:400px;text-align:center;top:611.00px;font-size:15.5px;line-height:17px;color:#111;">12</span>
<span class="t r" style="left:-162.60px;width:400px;text-align:center;top:637.00px;font-size:15.5px;line-height:17px;color:#111;">13</span>
<span class="t r" style="left:-162.60px;width:400px;text-align:center;top:662.00px;font-size:15.5px;line-height:17px;color:#111;">14</span>
<span class="t r" style="left:-162.60px;width:400px;text-align:center;top:688.00px;font-size:15.5px;line-height:17px;color:#111;">15</span>
<span class="t r" style="left:-162.60px;width:400px;text-align:center;top:713.00px;font-size:15.5px;line-height:17px;color:#111;">16</span>
<span class="t r" style="left:-162.60px;width:400px;text-align:center;top:739.00px;font-size:15.5px;line-height:17px;color:#111;">17</span>
<span class="t r" style="left:-162.60px;width:400px;text-align:center;top:764.00px;font-size:15.5px;line-height:17px;color:#111;">18</span>
<span class="t r" style="left:-162.60px;width:400px;text-align:center;top:790.00px;font-size:15.5px;line-height:17px;color:#111;">19</span>
<span class="t r" style="left:-162.60px;width:400px;text-align:center;top:816.00px;font-size:15.5px;line-height:17px;color:#111;">20</span>
<span class="t r" style="left:-162.60px;width:400px;text-align:center;top:841.00px;font-size:15.5px;line-height:17px;color:#111;">21</span>
<svg class="a" style="left:0;top:0" width="470" height="570" viewBox="0 0 470 570"><rect x="78.7" y="428.1" width="381.6" height="129.8" fill="#1c1815"/><rect x="81.4" y="430.9" width="375.9" height="124.3" fill="#f7cfa0"/></svg>
<span class="t s" style="left:109.20px;top:312.00px;font-size:19.4px;-webkit-text-stroke:0.4px;line-height:22px;color:#000;">Maloney, Inc., has an odd dividend policy. The company has just paid a dividend of $3.50 per</span>
<span class="t s" style="left:109.20px;top:335.00px;font-size:19.4px;-webkit-text-stroke:0.4px;line-height:22px;color:#000;">share and has announced that it will increase the dividend by $4.50 per share for each of the</span>
<span class="t s" style="left:109.20px;top:358.00px;font-size:19.4px;-webkit-text-stroke:0.4px;line-height:22px;color:#000;">next five years, and then never pay another dividend. If you require a return of 11 percent on</span>
<span class="t s" style="left:109.20px;top:381.00px;font-size:19.4px;-webkit-text-stroke:0.4px;line-height:22px;color:#000;">the company’s stock, how much will you pay for a share today?</span>
<span class="t s" style="left:108.20px;top:457.00px;font-size:19.4px;-webkit-text-stroke:0.4px;line-height:22px;color:#000;">Current dividend</span>
<span class="t s" style="left:108.20px;top:482.00px;font-size:19.4px;-webkit-text-stroke:0.4px;line-height:22px;color:#000;">Dividend growth</span>
<span class="t s" style="left:108.20px;top:508.00px;font-size:19.4px;-webkit-text-stroke:0.4px;line-height:22px;color:#000;">Required return</span>
<span class="t s" style="left:302.90px;top:457.00px;font-size:19.4px;-webkit-text-stroke:0.4px;line-height:22px;color:#0a0af0;">$</span>
<span class="t s" style="left:302.90px;top:482.00px;font-size:19.4px;-webkit-text-stroke:0.4px;line-height:22px;color:#0a0af0;">$</span>
<span class="t s" style="right:602.10px;top:457.00px;font-size:19.4px;-webkit-text-stroke:0.4px;line-height:22px;color:#0a0af0;">3.50</span>
<span class="t s" style="right:602.10px;top:482.00px;font-size:19.4px;-webkit-text-stroke:0.4px;line-height:22px;color:#0a0af0;">4.50</span>
<span class="t s" style="right:595.60px;top:508.00px;font-size:19.4px;-webkit-text-stroke:0.4px;line-height:22px;color:#0a0af0;">11%</span>
<span class="t s b" style="left:108.60px;top:586.00px;font-size:19.4px;-webkit-text-stroke:0.4px;line-height:22px;color:#e62d22;transform:scaleX(1.0021);transform-origin:0 50%;">Complete the following analysis. Do not hard code values in your calculations.</span>
<span class="t s" style="left:1.10px;width:400px;text-align:center;top:635.00px;font-size:19.4px;-webkit-text-stroke:0.4px;line-height:22px;color:#000;">Year</span>
<span class="t s" style="right:595.80px;top:635.00px;font-size:19.4px;-webkit-text-stroke:0.4px;line-height:22px;color:#000;">Dividend</span>
<span class="t s" style="left:0.40px;width:400px;text-align:center;top:661.00px;font-size:19.4px;-webkit-text-stroke:0.4px;line-height:22px;color:#000;">1</span>
<span class="t s" style="left:0.40px;width:400px;text-align:center;top:687.00px;font-size:19.4px;-webkit-text-stroke:0.4px;line-height:22px;color:#000;">2</span>
<span class="t s" style="left:0.40px;width:400px;text-align:center;top:712.00px;font-size:19.4px;-webkit-text-stroke:0.4px;line-height:22px;color:#000;">3</span>
<span class="t s" style="left:0.40px;width:400px;text-align:center;top:738.00px;font-size:19.4px;-webkit-text-stroke:0.4px;line-height:22px;color:#000;">4</span>
<span class="t s" style="left:0.40px;width:400px;text-align:center;top:763.00px;font-size:19.4px;-webkit-text-stroke:0.4px;line-height:22px;color:#000;">5</span>
<span class="t s" style="left:108.20px;top:813.00px;font-size:19.4px;-webkit-text-stroke:0.4px;line-height:22px;color:#000;">Share price</span>
<div class="a" style="left:968px;top:251.5px;width:21px;height:606.5px;background:#e8e8e8;"></div>
<div class="a" style="left:966.3px;top:252px;width:1.7000000000000455px;height:23px;background:#fff;"></div>
<div class="a" style="left:968px;top:251.4px;width:20.799999999999955px;height:20.299999999999983px;background:#e8e8e8;border:1px solid #c0c0c0;box-sizing:border-box;"></div>
<svg class="a" style="left:974px;top:258.7px" width="9.2" height="5.2" viewBox="0 0 9.2 5.2"><path d="M0 5.2H9.2L4.6 0Z" fill="#858585"/></svg>
<div class="a" style="left:968px;top:296px;width:20.799999999999955px;height:446.29999999999995px;background:#fff;border:1px solid #bcbcbc;box-sizing:border-box;"></div>
<div class="a" style="left:968px;top:837px;width:20.799999999999955px;height:19.700000000000045px;background:#e8e8e8;border:1px solid #c0c0c0;box-sizing:border-box;"></div>
<svg class="a" style="left:974.0px;top:844.2px" width="9.2" height="5.2" viewBox="0 0 9.2 5.2"><path d="M0 0H9.2L4.6 5.2Z" fill="#858585"/></svg>
<div class="a" style="left:22px;top:858px;width:967px;height:8px;background:#f3f3f3;"></div>
<div class="a" style="left:22px;top:857.3px;width:967px;height:1.3000000000000682px;background:#b9b9b9;"></div>
<div class="a" style="left:150.6px;top:857px;width:85.4px;height:9px;background:#fff;"></div>
<div class="a" style="left:150px;top:858px;width:1px;height:8px;background:#b9b9b9;"></div>
<div class="a" style="left:235.6px;top:858px;width:1.0px;height:8px;background:#b9b9b9;"></div>
<div class="a" style="left:601px;top:864.6px;width:20.600000000000023px;height:1.3999999999999773px;background:#a8a8a8;"></div>
<div class="a" style="left:623px;top:864.6px;width:236.60000000000002px;height:1.3999999999999773px;background:#a8a8a8;"></div>
<div class="a" style="left:944.5px;top:864.6px;width:20.100000000000023px;height:1.3999999999999773px;background:#a8a8a8;"></div>
<svg class="a" style="left:278px;top:862px" width="18" height="4" viewBox="0 0 18 4"><circle cx="9" cy="11" r="9" fill="none" stroke="#8a8a8a" stroke-width="1.4"/></svg>
</div>
</body></html>
